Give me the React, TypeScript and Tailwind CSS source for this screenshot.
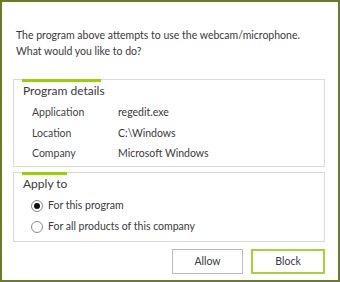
import React from 'react';

const details = [
    { label: 'Application', value: 'regedit.exe' },
    { label: 'Location', value: 'C:\\Windows' },
    { label: 'Company', value: 'Microsoft Windows' },
];

function Radio({ checked, label }: { checked?: boolean; label: string }) {
    return (
        <div className="flex items-center h-[21px]">
            <span className="w-[12px] h-[12px] rounded-full border border-[#8a8a8a] bg-white flex items-center justify-center">
                {checked && <span className="w-[6px] h-[6px] rounded-full bg-[#111]" />}
            </span>
            <span className="ml-[5px] text-[10.5px] text-[#3a3a3a]">{label}</span>
        </div>
    );
}

export default function App() {
    return (
        <div
            className="w-[340px] h-[282px] border-2 border-[#6b7b2a] bg-white pl-[11px] flex flex-col"
            style={{ fontFamily: 'Lato, "Noto Sans", sans-serif' }}
        >
            <p className="mt-[25px] ml-[3px] text-[10.5px] leading-[16px] text-[#3a3a3a]">
                The program above attempts to use the webcam/microphone.
                <br />
                What would you like to do?
            </p>

            <div className="relative mt-[20px] w-[312px] h-[88px] border border-[#dadad6]">
                <div className="absolute -top-px left-[8px] w-[79px] h-[3px] bg-[#99d100]" />
                <div className="pl-[9px] pt-[3px] text-[12px] leading-[16px] text-[#3a3a3a]">Program details</div>
                <div className="mt-[4px] pl-[18px]">
                    {details.map((d) => (
                        <div key={d.label} className="flex h-[20.5px] items-center text-[10.5px] text-[#3a3a3a]">
                            <span className="w-[86px] text-[#444]">{d.label}</span>
                            <span>{d.value}</span>
                        </div>
                    ))}
                </div>
            </div>

            <div className="relative mt-[5px] w-[312px] h-[70px] border border-[#dadad6]">
                <div className="absolute -top-px left-[8px] w-[45px] h-[3px] bg-[#99d100]" />
                <div className="pl-[9px] pt-[3px] text-[12px] leading-[16px] text-[#3a3a3a]">Apply to</div>
                <div className="mt-[3px] pl-[17px]">
                    <Radio checked label="For this program" />
                    <Radio label="For all products of this company" />
                </div>
            </div>

            <div className="mt-[7px] w-[312px] flex justify-end gap-[8px]">
                <button className="w-[71px] h-[25px] border border-[#bdbdbd] bg-white text-[10.5px] text-[#3a3a3a]">
                    Allow
                </button>
                <button className="w-[74px] h-[25px] border-2 border-[#a5d23c] bg-white text-[10.5px] text-[#3a3a3a]">
                    Block
                </button>
            </div>
        </div>
    );
}
